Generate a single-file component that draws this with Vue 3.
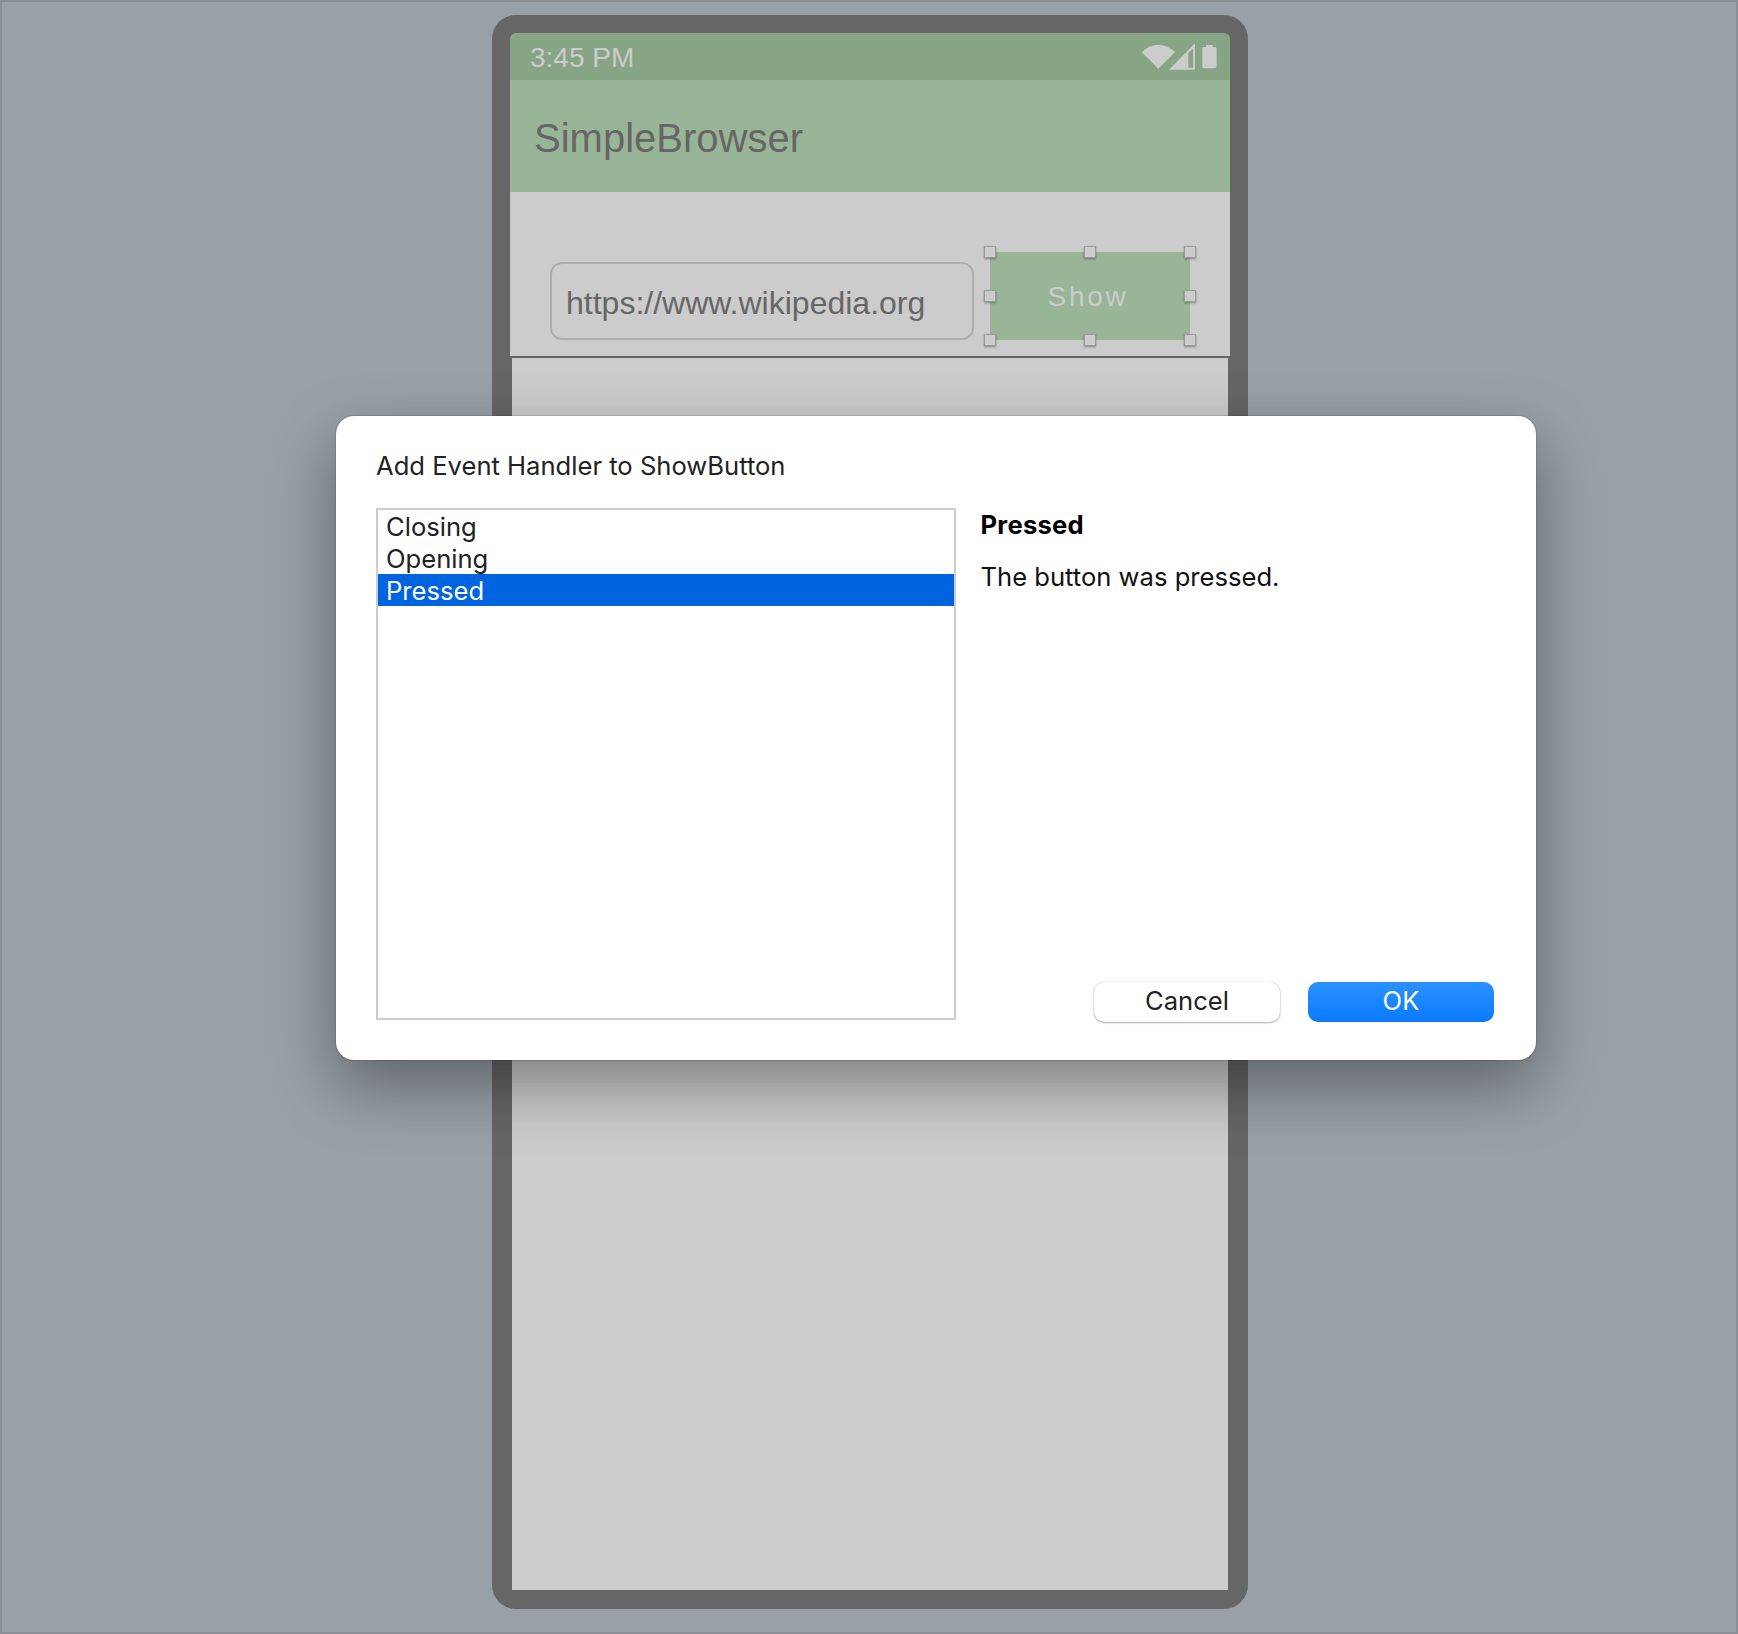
<script setup>
const events = ['Closing', 'Opening', 'Pressed']
const selected = 'Pressed'
const handles = ['tl', 'tc', 'tr', 'ml', 'mr', 'bl', 'bc', 'br']
</script>

<template>
  <div class="page">
    <div class="phone">
      <div class="status">
        <span class="time">3:45 PM</span>
        <svg class="status-icons" viewBox="60 66 235 84" aria-hidden="true">
          <path d="M65 93 Q115 50 165 93 L115 143 Z" fill="#cccccc" />
          <path fill-rule="evenodd" d="M147 146 L225 67 V146 Z M205 96 V140 H219 V82 Z" fill="#cccccc" />
          <path d="M258 78 V72 H278 V78 H284 Q290 78 290 84 V136 Q290 142 284 142 H253 Q247 142 247 136 V84 Q247 78 253 78 Z" fill="#cccccc" />
        </svg>
      </div>
      <div class="appbar">SimpleBrowser</div>
      <div class="toolbar">
        <div class="url">https://www.wikipedia.org</div>
        <div class="show">
          <span>Show</span>
          <i v-for="h in handles" :key="h" class="handle" :class="h"></i>
        </div>
      </div>
      <div class="webview"></div>
    </div>

    <div class="dialog">
      <div class="title">Add Event Handler to ShowButton</div>
      <div class="body">
        <ul class="list">
          <li v-for="e in events" :key="e" :class="{ sel: e === selected }">{{ e }}</li>
        </ul>
        <div class="detail">
          <div class="name">Pressed</div>
          <div class="desc">The button was pressed.</div>
          <div class="actions">
            <button class="btn cancel">Cancel</button>
            <button class="btn ok">OK</button>
          </div>
        </div>
      </div>
    </div>
  </div>
</template>

<style scoped>
.page {
  position: relative;
  box-sizing: border-box;
  width: 1738px;
  height: 1634px;
  padding: 13px 0 0 490px;
  background: #99a0a8;
  border: 2px solid #8b8e92;
  overflow: hidden;
}
.phone {
  box-sizing: border-box;
  width: 756px;
  height: 1594px;
  padding: 18px 18px 19px;
  display: flex;
  flex-direction: column;
  background: #666666;
  border-radius: 24px;
}
.status {
  flex: none;
  height: 47px;
  display: flex;
  align-items: center;
  justify-content: space-between;
  padding: 0 12px 0 20px;
  background: #85a585;
  border-radius: 6px 6px 0 0;
}
.time {
  padding-top: 2px;
  font: 28px/45px "Liberation Sans", Arial, sans-serif;
  color: #cccccc;
}
.status-icons {
  width: 78.3px;
  height: 28px;
}
.appbar {
  flex: none;
  box-sizing: border-box;
  height: 112px;
  padding: 4px 0 0 24px;
  background: #98b598;
  font: 40px/108px "Liberation Sans", Arial, sans-serif;
  color: #666666;
}
.toolbar {
  flex: none;
  box-sizing: border-box;
  height: 164px;
  padding: 60px 0 16px 40px;
  display: flex;
  align-items: flex-end;
  gap: 16px;
  background: #cccccc;
}
.url {
  box-sizing: border-box;
  width: 424px;
  height: 78px;
  padding: 4px 0 0 14px;
  border: 2px solid #aeaeae;
  border-radius: 12px;
  font: 32px/70px "Liberation Sans", Arial, sans-serif;
  color: #666666;
}
.show {
  position: relative;
  width: 200px;
  height: 88px;
  display: flex;
  align-items: center;
  justify-content: center;
  background: #98b598;
  font: 28px/1 "Liberation Sans", Arial, sans-serif;
  letter-spacing: 2.7px;
  color: #cccccc;
}
.show span {
  margin: 1px 0 0 -4px;
}
.handle {
  position: absolute;
  box-sizing: border-box;
  width: 12px;
  height: 12px;
  background: #cccccc;
  border: 1px solid #9a9a9a;
  box-shadow: 0 1px 2px rgba(0, 0, 0, 0.35);
}
.tl, .tc, .tr { top: -6px; }
.ml, .mr { top: 38px; }
.bl, .bc, .br { bottom: -6px; }
.tl, .ml, .bl { left: -6px; }
.tc, .bc { left: 94px; }
.tr, .mr, .br { right: -6px; }
.webview {
  flex: 1;
  margin: 2px 2px 0;
  background: #cccccc;
}
.dialog {
  position: absolute;
  left: 334px;
  top: 414px;
  box-sizing: border-box;
  width: 1200px;
  height: 644px;
  padding: 34px 42px 37px 40px;
  background: #ffffff;
  border-radius: 18px;
  box-shadow: 0 26px 64px rgba(0, 0, 0, 0.38), 0 0 2px rgba(0, 0, 0, 0.4);
  font-family: Inter, "Liberation Sans", sans-serif;
  font-size: 25.6px;
  color: #222222;
}
.title {
  height: 32px;
  line-height: 32px;
  margin-bottom: 26px;
}
.body {
  display: flex;
  height: 515px;
}
.list {
  box-sizing: border-box;
  width: 580px;
  height: 512px;
  margin: 0;
  padding: 0;
  list-style: none;
  border: 2px solid #cccccc;
}
.list li {
  box-sizing: border-box;
  height: 32px;
  padding: 1px 0 0 8px;
  line-height: 32px;
}
.list li.sel {
  background: #0064e1;
  color: #ffffff;
}
.detail {
  flex: 1;
  margin-left: 24.5px;
  padding-top: 1px;
  display: flex;
  flex-direction: column;
}
.name {
  height: 32px;
  line-height: 32px;
  font-weight: 700;
  letter-spacing: 0.25px;
  color: #000000;
}
.desc {
  height: 32px;
  margin-top: 20px;
  line-height: 32px;
  color: #111111;
}
.actions {
  margin-top: auto;
  margin-bottom: 1px;
  display: flex;
  justify-content: flex-end;
  gap: 28px;
}
.btn {
  box-sizing: border-box;
  width: 186px;
  height: 40px;
  padding: 0 0 2px;
  border: none;
  border-radius: 10px;
  font: inherit;
  line-height: 36px;
}
.cancel {
  background: #ffffff;
  color: #222222;
  box-shadow: 0 0 1px rgba(0, 0, 0, 0.35), 0 1px 2px rgba(0, 0, 0, 0.3);
}
.ok {
  background: linear-gradient(#2b91ff, #0a7aff);
  color: #ffffff;
}
</style>
